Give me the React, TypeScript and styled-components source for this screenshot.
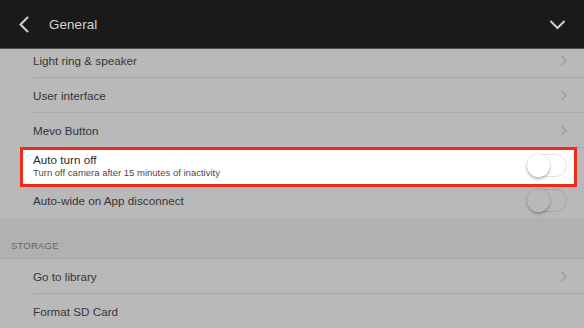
import React from "react";
import styled, { createGlobalStyle } from "styled-components";

const Global = createGlobalStyle`
  html, body { margin: 0; padding: 0; }
  body {
    width: 584px;
    height: 328px;
    overflow: hidden;
    background: #b9b9b9;
    font-family: "Liberation Sans", Arial, sans-serif;
    -webkit-font-smoothing: antialiased;
  }
`;

const Screen = styled.div`
  width: 584px;
  height: 328px;
  display: flex;
  flex-direction: column;
  overflow: hidden;
  background: #b9b9b9;
`;

const Header = styled.header`
  flex: 0 0 48px;
  display: flex;
  align-items: center;
  padding: 0 18px;
  background: #1a1a1a;
  border-bottom: 1px solid #4e4e4e;
  color: #d6d6d6;
`;

const HeaderTitle = styled.div`
  flex: 1;
  margin-left: 19px;
  font-size: 13.4px;
  letter-spacing: 0.1px;
  color: #d4d4d4;
`;

const IconButton = styled.div`
  display: flex;
  align-items: center;
  justify-content: center;
`;

const Content = styled.div`
  flex: 1;
  overflow: hidden;
`;

const List = styled.div<{ $offset?: number }>`
  display: flex;
  flex-direction: column;
  margin-top: ${(p) => -(p.$offset ?? 0)}px;
`;

const Row = styled.div`
  position: relative;
  height: 35px;
  padding-left: 33px;
  display: flex;
`;

const RowInner = styled.div<{ $noLine?: boolean; $raised?: boolean }>`
  position: relative;
  z-index: ${(p) => (p.$raised ? 3 : "auto")};
  flex: 1;
  display: flex;
  align-items: center;
  padding-right: 16px;
  border-bottom: 1px solid ${(p) => (p.$noLine ? "transparent" : "#a9a9a9")};
`;

const Texts = styled.div`
  flex: 1;
  display: flex;
  flex-direction: column;
  gap: 1px;
`;

const Title = styled.div<{ $bright?: boolean }>`
  font-size: 11.7px;
  color: ${(p) => (p.$bright ? "#2e2e2e" : "#363636")};
`;

const Subtitle = styled.div`
  font-size: 9.5px;
  color: #4a4a4a;
`;

const Highlight = styled.div`
  position: absolute;
  left: 20px;
  right: 7px;
  top: -1px;
  bottom: -4px;
  border: 3px solid #ee2a1c;
  background: #ffffff;
  z-index: 2;
`;

const SectionHeader = styled.div`
  height: 41px;
  box-sizing: border-box;
  background: #b1b1b1;
  border-bottom: 1px solid #a9a9a9;
  display: flex;
  align-items: flex-end;
  padding: 0 0 7px 11px;
  font-size: 9.5px;
  letter-spacing: 0.2px;
  color: #666666;
`;

const Track = styled.div<{ $dim?: boolean }>`
  position: relative;
  width: 40px;
  height: 23px;
  box-sizing: border-box;
  border-radius: 12px;
  border: 1px solid ${(p) => (p.$dim ? "#a6a6a6" : "#e2e2e2")};
  background: ${(p) => (p.$dim ? "#b9b9b9" : "#ffffff")};
  margin-right: 1px;
`;

const Knob = styled.div<{ $dim?: boolean }>`
  position: absolute;
  left: -1px;
  top: -1px;
  width: 23px;
  height: 23px;
  border-radius: 50%;
  background: ${(p) => (p.$dim ? "#b9b9b9" : "#ffffff")};
  box-shadow: 0 2px 3px
      ${(p) => (p.$dim ? "rgba(0,0,0,0.22)" : "rgba(0,0,0,0.28)")},
    0 0 0 0.5px ${(p) => (p.$dim ? "rgba(0,0,0,0.12)" : "rgba(0,0,0,0.1)")};
`;

const Chevron = () => (
  <svg width="8" height="11" viewBox="0 0 8 11">
    <path d="M1.5 1 L6 5.5 L1.5 10" fill="none" stroke="#9b9b9b" strokeWidth="1.3" />
  </svg>
);

const Toggle = ({ dim }: { dim?: boolean }) => (
  <Track $dim={dim}>
    <Knob $dim={dim} />
  </Track>
);

type Item = {
  title: string;
  subtitle?: string;
  kind: "link" | "toggle" | "none";
  highlight?: boolean;
  noLine?: boolean;
};

const general: Item[] = [
  { title: "Light ring & speaker", kind: "link" },
  { title: "User interface", kind: "link" },
  { title: "Mevo Button", kind: "link" },
  {
    title: "Auto turn off",
    subtitle: "Turn off camera after 15 minutes of inactivity",
    kind: "toggle",
    highlight: true,
  },
  { title: "Auto-wide on App disconnect", kind: "toggle", noLine: true },
];

const storage: Item[] = [
  { title: "Go to library", kind: "link" },
  { title: "Format SD Card", kind: "none", noLine: true },
];

const SettingRow = ({ item }: { item: Item }) => (
  <Row>
    {item.highlight && <Highlight />}
    <RowInner $noLine={item.noLine || item.highlight} $raised={item.highlight}>
      <Texts>
        <Title $bright={item.highlight}>{item.title}</Title>
        {item.subtitle && <Subtitle>{item.subtitle}</Subtitle>}
      </Texts>
      {item.kind === "link" && <Chevron />}
      {item.kind === "toggle" && <Toggle dim={!item.highlight} />}
    </RowInner>
  </Row>
);

export default function App() {
  return (
    <>
      <Global />
      <Screen>
        <Header>
          <IconButton>
            <svg width="12" height="17" viewBox="0 0 12 17">
              <path d="M10 1 L2.5 8.5 L10 16" fill="none" stroke="#cfcfcf" strokeWidth="2" />
            </svg>
          </IconButton>
          <HeaderTitle>General</HeaderTitle>
          <IconButton>
            <svg width="17" height="11" viewBox="0 0 17 11">
              <path d="M1.5 2 L8.5 9 L15.5 2" fill="none" stroke="#cfcfcf" strokeWidth="2" />
            </svg>
          </IconButton>
        </Header>
        <Content>
          <List $offset={6}>
            {general.map((it) => (
              <SettingRow key={it.title} item={it} />
            ))}
            <SectionHeader>STORAGE</SectionHeader>
            {storage.map((it) => (
              <SettingRow key={it.title} item={it} />
            ))}
          </List>
        </Content>
      </Screen>
    </>
  );
}
